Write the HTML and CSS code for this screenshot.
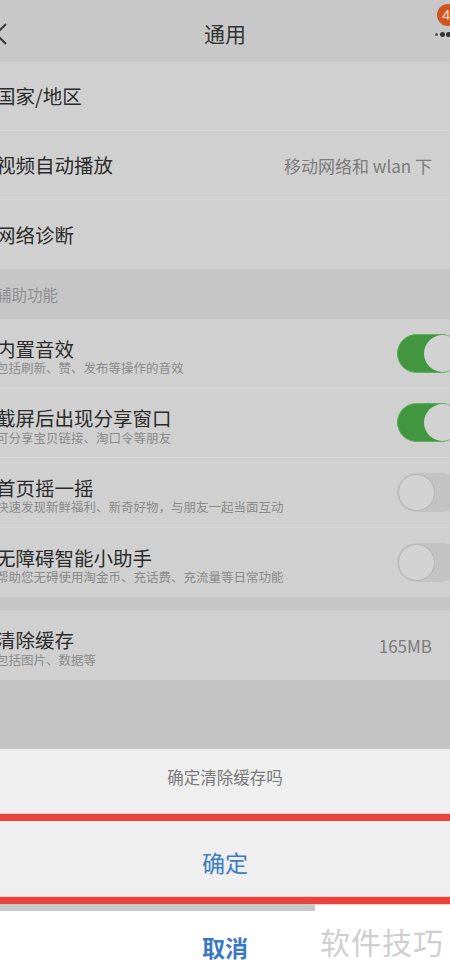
FILE: index.html
```html
<!DOCTYPE html>
<html lang="zh">
<head>
<meta charset="utf-8">
<link rel="stylesheet" href="styles.css">
</head>
<body>
<div class="screen">
  <header class="header">
    <svg class="back" width="12" height="24" viewBox="0 0 12 24"><polyline points="6,2 -4,12 6,22" fill="none" stroke="#3a3a3a" stroke-width="2"/></svg>
    <div class="title">通用</div>
    <div class="more">
      <span class="dot small"></span><span class="dot"></span><span class="dot"></span>
      <span class="badge">4</span>
    </div>
  </header>

  <section class="group">
    <div class="row"><span class="rtitle">国家/地区</span><span class="chev"></span></div>
    <div class="row"><span class="rtitle">视频自动播放</span><span class="value">移动网络和 wlan 下</span><span class="chev"></span></div>
    <div class="row"><span class="rtitle">网络诊断</span><span class="chev"></span></div>
  </section>

  <div class="section-label">辅助功能</div>

  <section class="group">
    <div class="row row-sub">
      <div class="texts"><div class="rtitle">内置音效</div><div class="sub">包括刷新、赞、发布等操作的音效</div></div>
      <span class="toggle on"><span class="knob"></span></span>
    </div>
    <div class="row row-sub">
      <div class="texts"><div class="rtitle">截屏后出现分享窗口</div><div class="sub">可分享宝贝链接、淘口令等朋友</div></div>
      <span class="toggle on"><span class="knob"></span></span>
    </div>
    <div class="row row-sub">
      <div class="texts"><div class="rtitle">首页摇一摇</div><div class="sub">快速发现新鲜福利、新奇好物，与朋友一起当面互动</div></div>
      <span class="toggle"><span class="knob"></span></span>
    </div>
    <div class="row row-sub">
      <div class="texts"><div class="rtitle">无障碍智能小助手</div><div class="sub">帮助您无碍使用淘金币、充话费、充流量等日常功能</div></div>
      <span class="toggle"><span class="knob"></span></span>
    </div>
  </section>

  <div class="gap"></div>

  <section class="group">
    <div class="row row-sub">
      <div class="texts"><div class="rtitle">清除缓存</div><div class="sub">包括图片、数据等</div></div>
      <span class="value">165MB</span><span class="chev"></span>
    </div>
  </section>

  <div class="dim"></div>

  <div class="sheet">
    <div class="sheet-title">确定清除缓存吗</div>
    <div class="redline"></div>
    <div class="sheet-btn">确定</div>
    <div class="redline"></div>
    <div class="graybar"></div>
    <div class="cancel">
      <span class="cancel-text">取消</span>
      <span class="watermark">软件技巧</span>
    </div>
  </div>
</div>
</body>
</html>
```

FILE: styles.css
```css
* { box-sizing: border-box; }
html, body { margin: 0; padding: 0; }
body {
  width: 450px;
  height: 975px;
  overflow: hidden;
  background: #ffffff;
  font-family: "Noto Sans CJK SC", "Noto Sans", sans-serif;
  color: #2f2f2f;
}
.screen { width: 450px; display: flex; flex-direction: column; }

.header {
  height: 62px;
  background: #c8c8c8;
  display: flex;
  align-items: center;
  justify-content: center;
  position: relative;
}
.back { position: absolute; left: 0; top: 22px; }
.title { font-size: 21px; color: #333; margin-top: 4px; }
.more { position: absolute; right: 0; top: 0; width: 18px; height: 62px; }
.dot { position: absolute; top: 32px; width: 5px; height: 5px; border-radius: 50%; background: #333; }
.dot.small { left: 3px; width: 3px; height: 3px; top: 33px; background: #555; }
.dot:nth-child(2) { left: 8px; }
.dot:nth-child(3) { left: 14px; }
.badge {
  position: absolute;
  left: 5px; top: 4px;
  width: 22px; height: 22px;
  border-radius: 50%;
  background: #d0541f;
  color: #f3d9c8;
  font-family: "Liberation Sans", sans-serif;
  font-size: 15px;
  line-height: 22px;
  padding-left: 5px;
}

.group { background: #d0d0d0; }
.row {
  height: 69px;
  display: flex;
  align-items: center;
  border-bottom: 1px solid #d8d8d8;
  position: relative;
}
.row:last-child { border-bottom: none; }
.rtitle { font-size: 19.5px; color: #2b2b2b; margin-left: -4px; flex: 1; line-height: 1.2; }
.value { font-size: 17px; color: #7b7b7b; margin-right: 12px; }
.chev { width: 6px; height: 14px; border-right: 1px solid #cbcbcb; }

.row-sub { height: 69.5px; }
.texts { flex: 1; display: flex; flex-direction: column; margin-top: 7px; }
.texts .rtitle { flex: none; }
.sub { font-size: 12.5px; color: #8a8a8a; margin-left: -4px; margin-top: 0; line-height: 1.3; }
.row-sub .value { margin-top: 2px; }

.section-label {
  height: 50px;
  background: #c6c6c6;
  font-size: 15.5px;
  color: #8e8e8e;
  display: flex;
  align-items: center;
  text-indent: -4px;
}

.toggle {
  width: 64px; height: 39px;
  border-radius: 20px;
  margin-right: -11px;
  margin-top: 0;
  background: #c3c3c3;
  position: relative;
  flex: none;
}
.toggle.on { background: #42963f; border: 1px solid #5aae55; }
.knob {
  position: absolute;
  top: 1px; left: 1px;
  width: 37px; height: 37px;
  border-radius: 50%;
  background: #d3d3d3;
  border: 1.5px solid #b4b4b4;
}
.toggle.on .knob { left: 26px; top: 0; border: none; background: #d2d2d2; }

.gap { height: 13px; background: #c6c6c6; }

.dim { height: 69px; background: #c4c4c4; }

.sheet { display: flex; flex-direction: column; background: #ffffff; }
.sheet-title {
  height: 65px;
  background: #efefef;
  display: flex; align-items: center; justify-content: center;
  font-size: 16.5px; color: #7a7a7a;
  padding-bottom: 8px;
}
.redline {
  height: 7px;
  background: #e8443d;
  box-shadow: 0 -1px 0 #f6c9c3, 0 1px 0 #f6c9c3;
}
.sheet-btn {
  height: 76px;
  background: #efefef;
  display: flex; align-items: center; justify-content: center;
  font-size: 23px; color: #3d7cc2;
  padding-top: 6px;
}
.graybar { width: 315px; height: 7px; background: #c8c8c8; }
.cancel {
  height: 63px;
  position: relative;
  display: flex; align-items: center; justify-content: center;
  padding-top: 10px;
}
.cancel-text { font-size: 23px; font-weight: bold; color: #3a78c3; }
.watermark {
  position: absolute;
  left: 320px; top: 8px;
  font-size: 30px;
  color: #cfcfcf;
  letter-spacing: 1px;
}
```
